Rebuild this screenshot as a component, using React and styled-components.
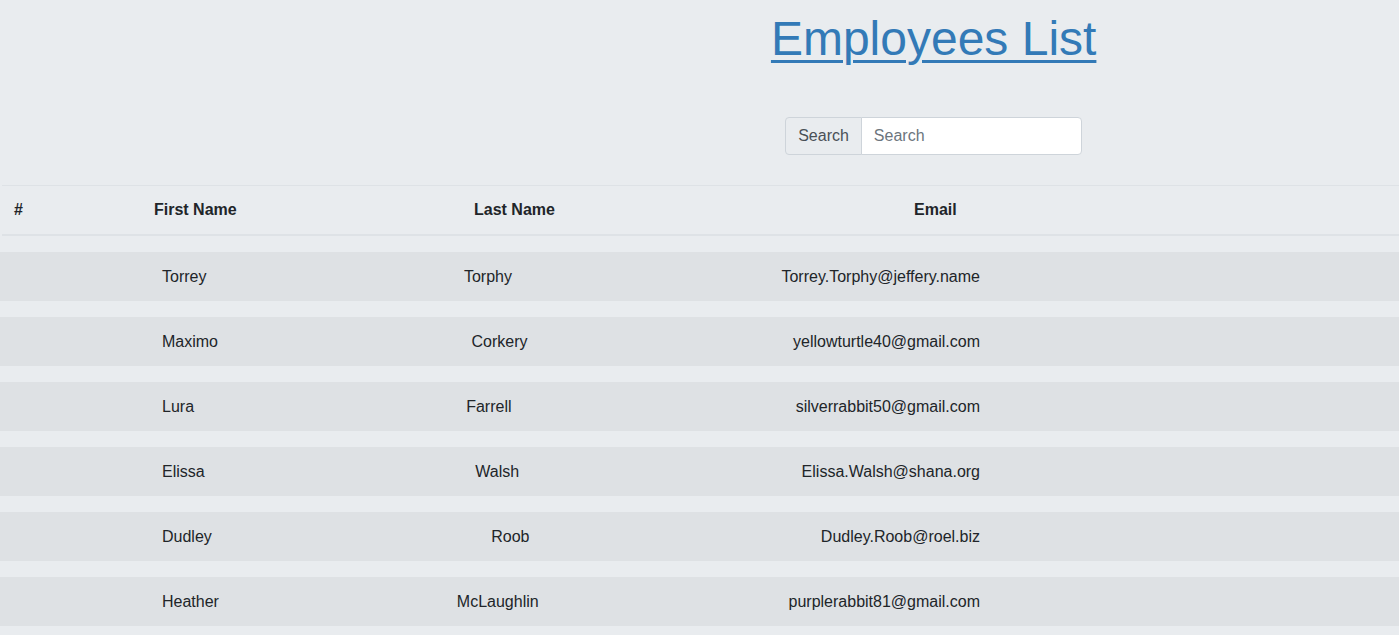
import React from "react";
import styled, { createGlobalStyle } from "styled-components";

const GlobalStyle = createGlobalStyle`
  html, body {
    margin: 0;
    padding: 0;
    background: #e9ecef;
    font-family: "Liberation Sans", Arial, sans-serif;
    font-size: 16px;
    color: #212529;
  }
  * { box-sizing: border-box; }
`;

const Page = styled.div`
  padding-top: 10px;
  min-height: 100vh;
`;

const Header = styled.header`
  display: grid;
  grid-template-columns: 1fr 2fr;
`;

const HeaderInner = styled.div`
  grid-column: 2;
  display: flex;
  flex-direction: column;
  align-items: center;
  padding-left: 2px;
`;

const Title = styled.h1`
  margin: 0;
  font-size: 48px;
  font-weight: 400;
  line-height: 1.2;
`;

const TitleLink = styled.a`
  color: #337ab7;
  text-decoration: underline;
  text-decoration-thickness: 3px;
  text-underline-offset: 5px;
  cursor: pointer;
`;

const InputGroup = styled.div`
  display: flex;
  width: 297px;
  margin-top: 49px;
`;

const Addon = styled.span`
  display: flex;
  align-items: center;
  padding: 6px 12px;
  font-size: 16px;
  line-height: 24px;
  color: #495057;
  background: #e9ecef;
  border: 1px solid #ced4da;
  border-radius: 4px 0 0 4px;
`;

const SearchInput = styled.input`
  flex: 1;
  min-width: 0;
  margin-left: -1px;
  padding: 6px 12px;
  font-family: inherit;
  font-size: 16px;
  line-height: 24px;
  height: 38px;
  color: #495057;
  background: #fff;
  border: 1px solid #ced4da;
  border-radius: 0 4px 4px 0;
  outline: none;
  &::placeholder { color: #6c757d; }
`;

const TableHead = styled.div`
  display: grid;
  grid-template-columns: 140px 320px 440px 1fr;
  margin: 30px 0 16px 2px;
  border-top: 1px solid #dee2e6;
  border-bottom: 2px solid #dee2e6;
`;

const Th = styled.div`
  padding: 12px;
  font-weight: 700;
  line-height: 24px;
`;

const Rows = styled.div`
  display: flex;
  flex-direction: column;
  gap: 16px;
`;

const Row = styled.div`
  display: flex;
  align-items: center;
  height: 49px;
  padding-top: 2px;
  background: #dee1e4;
`;

const Cells = styled.div`
  display: flex;
  justify-content: space-between;
  align-items: center;
  width: 818px;
  margin-left: 162px;
  line-height: 24px;
`;

const Cell = styled.span`
  padding-right: ${(p) => (p.$pad ? "12px" : "0")};
`;

const employees = [
  ["Torrey", "Torphy", "Torrey.Torphy@jeffery.name"],
  ["Maximo", "Corkery", "yellowturtle40@gmail.com"],
  ["Lura", "Farrell", "silverrabbit50@gmail.com"],
  ["Elissa", "Walsh", "Elissa.Walsh@shana.org"],
  ["Dudley", "Roob", "Dudley.Roob@roel.biz"],
  ["Heather", "McLaughlin", "purplerabbit81@gmail.com"],
];

export default function App() {
  return (
    <Page>
      <GlobalStyle />
      <Header>
        <HeaderInner>
          <Title>
            <TitleLink href="#">Employees List</TitleLink>
          </Title>
          <InputGroup>
            <Addon>Search</Addon>
            <SearchInput placeholder="Search" />
          </InputGroup>
        </HeaderInner>
      </Header>
      <TableHead>
        <Th>#</Th>
        <Th>First Name</Th>
        <Th>Last Name</Th>
        <Th>Email</Th>
      </TableHead>
      <Rows>
        {employees.map(([first, last, email]) => (
          <Row key={email}>
            <Cells>
              <Cell>{first}</Cell>
              <Cell $pad>{last}</Cell>
              <Cell>{email}</Cell>
            </Cells>
          </Row>
        ))}
      </Rows>
    </Page>
  );
}
